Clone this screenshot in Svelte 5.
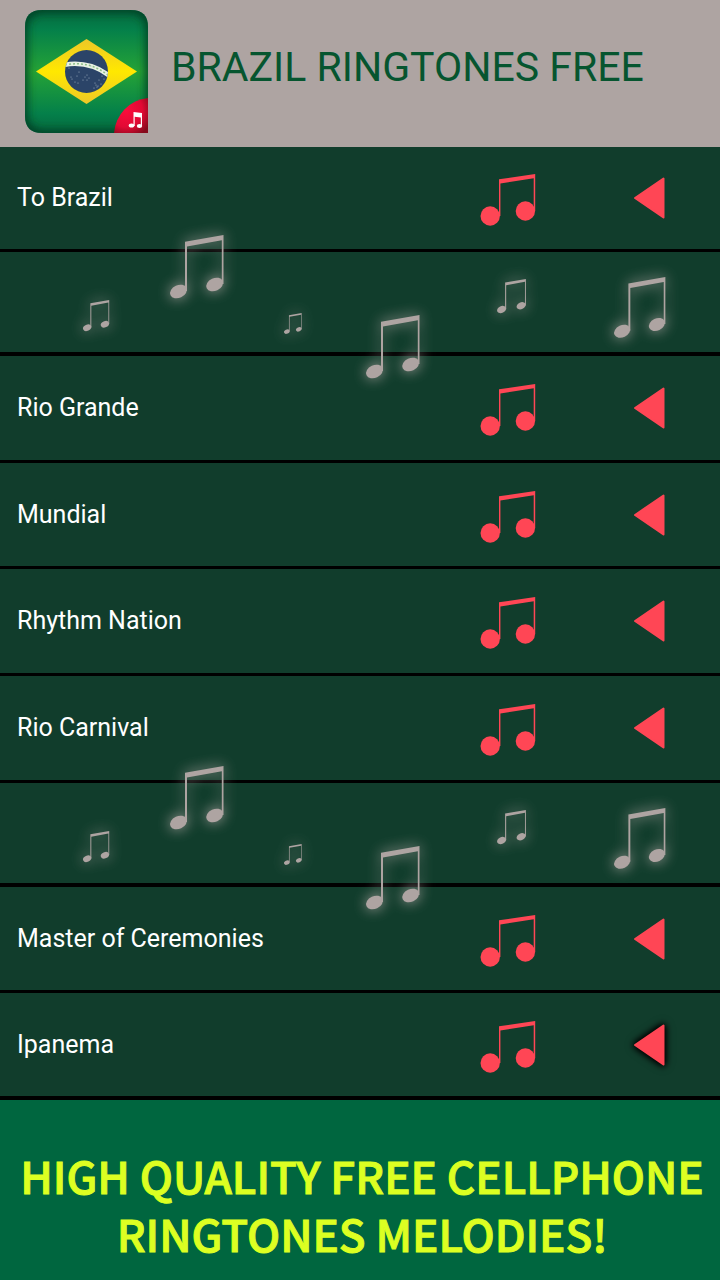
<script>
	const rows = [
		{ name: 'To Brazil' },
		{ ornament: true },
		{ name: 'Rio Grande' },
		{ name: 'Mundial' },
		{ name: 'Rhythm Nation' },
		{ name: 'Rio Carnival' },
		{ ornament: true },
		{ name: 'Master of Ceremonies' },
		{ name: 'Ipanema' }
	];

	// x, y and scale of each floating note
	const notes = [
		[83, 48, 0.49],
		[170, -17, 1],
		[284, 61, 0.33],
		[366, 63, 1],
		[497, 27, 0.54],
		[614, 25, 0.96]
	];

	// specks below the band of the flag's globe
	const stars = [
		[44, 58], [46, 67], [47, 69], [50, 72], [53, 73], [54, 62], [52, 66],
		[62, 65], [60, 67], [64, 68], [62, 70], [58, 70], [70, 73], [72, 77],
		[74, 70], [77, 66], [79, 69], [76, 74], [69, 78], [71, 75], [66, 56], [73, 76]
	];

	let active = $state('Ipanema');
</script>

<div class="app">
	<header>
		<svg class="logo" viewBox="0 0 123 123" aria-hidden="true">
			<defs>
				<linearGradient id="field" x1="0" y1="0" x2="0" y2="1">
					<stop offset="0" stop-color="#04683f" />
					<stop offset="0.16" stop-color="#04804a" />
					<stop offset="0.5" stop-color="#25a336" />
					<stop offset="0.84" stop-color="#04804a" />
					<stop offset="1" stop-color="#04683f" />
				</linearGradient>
				<linearGradient id="diamond" x1="0" y1="0" x2="0" y2="1">
					<stop offset="0" stop-color="#eec728" />
					<stop offset="0.5" stop-color="#ffe800" />
					<stop offset="1" stop-color="#eec728" />
				</linearGradient>
				<radialGradient id="corner" cx="0.35" cy="0.35" r="0.8">
					<stop offset="0" stop-color="#fb0d3c" />
					<stop offset="0.6" stop-color="#e20a34" />
					<stop offset="1" stop-color="#860a1c" />
				</radialGradient>
				<filter id="soft" x="-20%" y="-20%" width="140%" height="140%">
					<feGaussianBlur stdDeviation="4" />
				</filter>
				<clipPath id="tile">
					<path d="M17 0H106Q123 0 123 17V123H17Q0 123 0 106V17Q0 0 17 0Z" />
				</clipPath>
				<clipPath id="globe"><circle cx="61.5" cy="61.5" r="21.5" /></clipPath>
			</defs>
			<g clip-path="url(#tile)">
				<rect width="123" height="123" fill="url(#field)" />
				<rect
					x="-2"
					y="-2"
					width="127"
					height="127"
					rx="19"
					fill="none"
					stroke="#003d22"
					stroke-width="9"
					filter="url(#soft)"
				/>
				<path d="M61.5 29L112 61.5L61.5 94L11 61.5Z" fill="url(#diamond)" />
				<circle cx="61.5" cy="61.5" r="21.5" fill="#2b4468" />
				<g clip-path="url(#globe)">
					<path d="M38 55Q65 50 86 67" fill="none" stroke="#e9f2e4" stroke-width="4.5" />
					<path
						d="M40 55Q65 50 84 66"
						fill="none"
						stroke="#8fc08a"
						stroke-width="1.5"
						stroke-dasharray="2 2"
					/>
				</g>
				{#each stars as [x, y]}
					<circle cx={x} cy={y} r="0.6" fill="#9fb0bf" />
				{/each}
				<path d="M123 88A38 38 0 0 0 89 123H123Z" fill="url(#corner)" />
				<path d="M108.5 102L117 103V116H115.8V107.5L109.7 106.8V116H108.5Z" fill="#fff" />
				<ellipse cx="106.5" cy="115.5" rx="2.8" ry="2" fill="#fff" />
				<ellipse cx="114.5" cy="116" rx="2.7" ry="2" fill="#fff" />
			</g>
		</svg>
		<h1>BRAZIL RINGTONES FREE</h1>
	</header>

	<ul>
		{#each rows as row}
			{#if row.ornament}
				<li class="ornament" aria-hidden="true">
					<svg viewBox="0 0 720 100">
						{#each notes as [x, y, scale]}
							<g class="floating">
								<g transform="translate({x} {y}) scale({scale})">
									<path d="M15 6.7L53.5 0V49H51.8V5.3L17 11.5V56H15Z" />
									<ellipse cx="8.5" cy="56.5" rx="8.8" ry="6.3" transform="rotate(-25 8.5 56.5)" />
									<ellipse cx="44.7" cy="49.5" rx="8.8" ry="6.3" transform="rotate(-25 44.7 49.5)" />
								</g>
							</g>
						{/each}
					</svg>
				</li>
			{:else}
				<li class="song">
					<span>{row.name}</span>
					<svg class="note" viewBox="0 -4 56 56" aria-hidden="true">
						<path d="M19 5.3L55.2 0V37H53.7V4.2L20.4 9.5V42H19Z" />
						<circle cx="10.2" cy="42" r="9.7" />
						<circle cx="45.4" cy="37" r="9.7" />
					</svg>
					<button
						type="button"
						class:active={active === row.name}
						aria-label="Play {row.name}"
						onclick={() => (active = row.name)}
					>
						<svg viewBox="0 0 32 42" aria-hidden="true">
							<path d="M2 21L30.5 1.5V40.5Z" />
						</svg>
					</button>
				</li>
			{/if}
		{/each}
	</ul>

	<footer>
		<p>HIGH QUALITY FREE CELLPHONE RINGTONES MELODIES!</p>
	</footer>
</div>

<style>
	:global(body) {
		margin: 0;
		background: #00663f;
	}

	.app {
		display: flex;
		flex-direction: column;
		min-height: 100vh;
		font-family: Roboto, 'Liberation Sans', sans-serif;
	}

	header {
		display: flex;
		align-items: center;
		gap: 23px;
		padding: 10px 24px 14px 25px;
		background: #aea4a2;
	}

	.logo {
		flex: none;
		width: 123px;
		height: 123px;
	}

	h1 {
		margin: 0;
		padding-bottom: 10px;
		color: #06552f;
		font-size: 41px;
		font-weight: 400;
		line-height: 48px;
	}

	ul {
		display: flex;
		flex: 1;
		flex-direction: column;
		margin: 0;
		padding: 0;
		list-style: none;
		background: #113d2c;
	}

	li {
		box-sizing: border-box;
		border-bottom: 3px solid #000;
	}

	.song {
		display: grid;
		flex: 1 0 auto;
		grid-template-columns: 1fr 56px 32px;
		column-gap: 97px;
		align-items: center;
		min-height: 105px;
		padding: 0 55px 0 17px;
		color: #fff;
		font-size: 25px;
		line-height: 32px;
	}

	.song:first-child {
		flex: none;
	}

	.song:last-child {
		border-bottom-width: 4px;
	}

	.ornament {
		flex: none;
		height: 104px;
		border-bottom-width: 4px;
	}

	.ornament svg {
		display: block;
		position: relative;
		z-index: 1;
		width: 100%;
		height: 100px;
		overflow: visible;
		pointer-events: none;
	}

	.floating {
		fill: #aea4a2;
		filter: drop-shadow(0 0 7px #aea4a2);
	}

	.note {
		width: 56px;
		height: 56px;
		fill: #ff4655;
	}

	button {
		display: block;
		padding: 0;
		border: 0;
		background: none;
		cursor: pointer;
	}

	button svg {
		display: block;
		width: 32px;
		height: 42px;
		overflow: visible;
		fill: #ff4655;
		stroke: #ff4655;
		stroke-linejoin: round;
		stroke-width: 2;
	}

	button.active svg {
		filter: drop-shadow(0 0 3px #000) drop-shadow(0 0 3px #000);
	}

	footer {
		padding: 46px 8px 18px 12px;
		background: #00663f;
	}

	p {
		margin: 0;
		color: #dcff22;
		font-family: 'Noto Sans CJK SC', 'Open Sans', sans-serif;
		font-size: 44px;
		font-weight: 500;
		line-height: 58px;
		text-align: center;
		-webkit-text-stroke: 1px #dcff22;
	}
</style>
